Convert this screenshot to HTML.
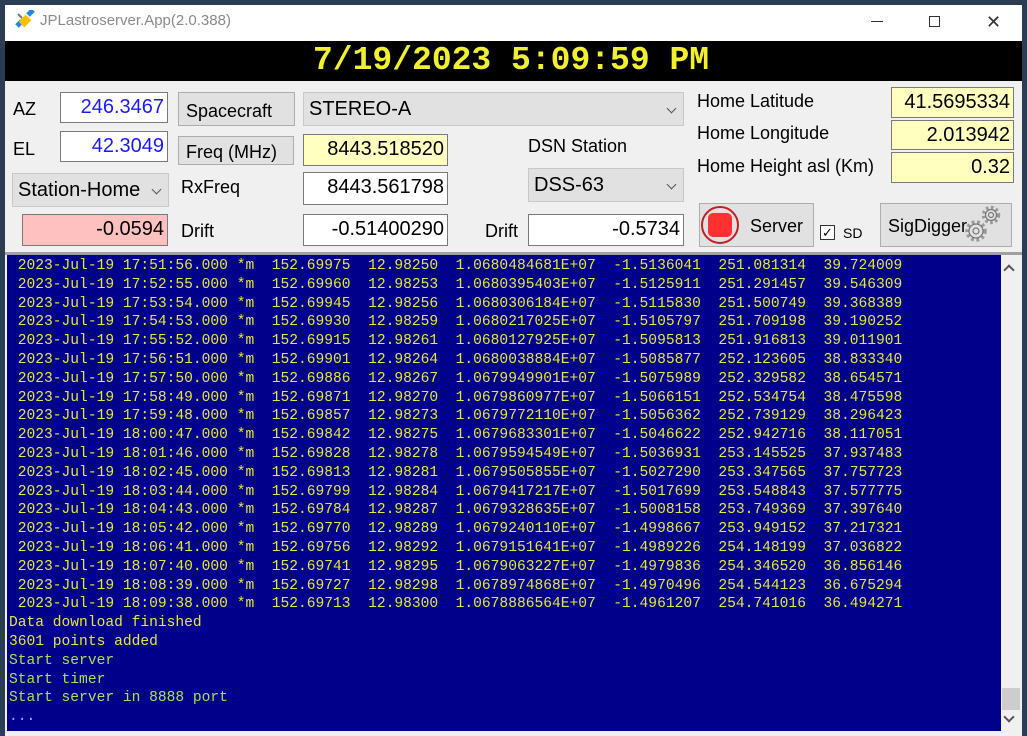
<!DOCTYPE html>
<html><head><meta charset="utf-8"><style>
*{margin:0;padding:0;box-sizing:border-box}
body{width:1027px;height:736px;overflow:hidden;background:#2b3d52;font-family:"Liberation Sans",sans-serif;position:relative}
.a{position:absolute}
#win{position:absolute;left:5px;top:5px;width:1017px;height:731px;background:#f0f0f0}
.lbl{position:absolute;font-size:18px;color:#000;line-height:20px}
.in{position:absolute;background:#fff;border:1px solid #7a7a7a;font-size:20px;text-align:right;padding-right:3px;line-height:29px;color:#000}
.btn{position:absolute;background:#e1e1e1;border:1px solid #adadad;font-size:18px;color:#000}
.cmb{position:absolute;background:#e1e1e1;border:1px solid #c8c8c8;font-size:20px;color:#000;line-height:32px;padding-left:5px}
.cmb:after{content:"";position:absolute;right:8px;top:12px;width:6px;height:6px;border-right:1px solid #555;border-bottom:1px solid #555;transform:rotate(45deg)}
#log{position:absolute;left:7px;top:255px;width:994px;height:476px;background:#00008b;font-family:"Liberation Mono",monospace;font-size:14.6px;line-height:18.8px;color:#e6e63c;white-space:pre;padding:2px 0 0 2px;overflow:hidden}
.g{color:#a8e050}
</style></head><body>
<div id="win"></div>
<div class="a" style="left:5px;top:5px;width:1017px;height:36px;background:#fff"></div>
<svg class="a" style="left:14px;top:10px" width="22" height="22" viewBox="0 0 22 22">
<path d="M3 16 L8 11" stroke="#1e88e5" stroke-width="5"/><path d="M14 5 L19 0" stroke="#1e88e5" stroke-width="5"/>
<rect x="7" y="6" width="8" height="10" fill="#f5c000" transform="rotate(45 11 11)"/>
<path d="M4 4 L8 8" stroke="#777" stroke-width="2"/></svg>
<div class="a" style="left:40px;top:12px;font-size:15px;color:#8a8a8a">JPLastroserver.App(2.0.388)</div>
<div class="a" style="left:871px;top:21px;width:12px;height:1px;background:#333"></div>
<div class="a" style="left:929px;top:16px;width:11px;height:11px;border:1px solid #333"></div>
<div class="a" style="left:986px;top:12px;font-size:18px;color:#333">✕</div>
<div class="a" style="left:5px;top:41px;width:1017px;height:40px;background:#000"></div>
<div class="a" style="left:313px;top:42px;font-family:'Liberation Mono',monospace;font-size:33px;line-height:38px;color:#f0f030;font-weight:bold">7/19/2023 5:09:59 PM</div>
<div class="lbl" style="left:13px;top:99px">AZ</div>
<div class="in" style="left:60px;top:92px;width:108px;height:31px;color:#1a1aff">246.3467</div>
<div class="lbl" style="left:13px;top:139px">EL</div>
<div class="in" style="left:60px;top:131px;width:108px;height:31px;color:#1a1aff">42.3049</div>
<div class="cmb" style="left:12px;top:173px;width:157px;height:34px">Station-Home</div>
<div class="in" style="left:22px;top:214px;width:146px;height:32px;background:#ffc0c0">-0.0594</div>
<div class="btn" style="left:178px;top:92px;width:117px;height:34px;padding:8px 0 0 7px">Spacecraft</div>
<div class="btn" style="left:178px;top:136px;width:116px;height:29px;padding:5px 0 0 7px">Freq (MHz)</div>
<div class="lbl" style="left:181px;top:177px">RxFreq</div>
<div class="lbl" style="left:181px;top:221px">Drift</div>
<div class="cmb" style="left:303px;top:92px;width:381px;height:34px">STEREO-A</div>
<div class="in" style="left:303px;top:134px;width:145px;height:32px;background:#ffffc0">8443.518520</div>
<div class="in" style="left:303px;top:172px;width:145px;height:33px">8443.561798</div>
<div class="in" style="left:303px;top:214px;width:145px;height:32px">-0.51400290</div>
<div class="lbl" style="left:528px;top:136px">DSN Station</div>
<div class="cmb" style="left:528px;top:168px;width:156px;height:34px">DSS-63</div>
<div class="lbl" style="left:485px;top:221px">Drift</div>
<div class="in" style="left:528px;top:214px;width:156px;height:32px">-0.5734</div>
<div class="lbl" style="left:697px;top:91px">Home Latitude</div>
<div class="lbl" style="left:697px;top:123px">Home Longitude</div>
<div class="lbl" style="left:697px;top:156px">Home Height asl (Km)</div>
<div class="in" style="left:891px;top:87px;width:123px;height:31px;background:#ffffc0">41.5695334</div>
<div class="in" style="left:891px;top:120px;width:123px;height:30px;background:#ffffc0;line-height:28px">2.013942</div>
<div class="in" style="left:891px;top:152px;width:123px;height:31px;background:#ffffc0">0.32</div>
<div class="btn" style="left:699px;top:203px;width:115px;height:44px"></div>
<svg class="a" style="left:700px;top:205px" width="40" height="40"><circle cx="20" cy="20" r="18" fill="none" stroke="#c02020" stroke-width="2"/><rect x="8" y="8" width="24" height="24" rx="5" fill="#ff3030"/></svg>
<div class="lbl" style="left:750px;top:216px">Server</div>
<div class="a" style="left:820px;top:225px;width:15px;height:15px;border:1px solid #333;background:#fff;font-size:13px;line-height:13px;text-align:center">✓</div>
<div class="a" style="left:843px;top:225px;font-size:14px">SD</div>
<div class="btn" style="left:880px;top:203px;width:132px;height:44px"></div>
<div class="lbl" style="left:888px;top:216px">SigDigger</div>
<svg class="a" style="left:962px;top:204px" width="44" height="42" fill="none" stroke="#777" stroke-width="1.2">
<circle cx="29" cy="11" r="7.5" stroke-dasharray="2.6 2.4" stroke-width="3.5" stroke="#999"/><circle cx="29" cy="11" r="5.5" fill="#e1e1e1"/><circle cx="29" cy="11" r="2.5"/>
<circle cx="14" cy="27" r="9" stroke-dasharray="2.8 2.6" stroke-width="3.5" stroke="#999"/><circle cx="14" cy="27" r="7" fill="#e1e1e1"/><circle cx="14" cy="27" r="3"/></svg>
<div class="a" style="left:5px;top:252px;width:1017px;height:3px;background:#a0a0a0"></div>
<div id="log"> 2023-Jul-19 17:51:56.000 *m  152.69975  12.98250  1.0680484681E+07  -1.5136041  251.081314  39.724009
 2023-Jul-19 17:52:55.000 *m  152.69960  12.98253  1.0680395403E+07  -1.5125911  251.291457  39.546309
 2023-Jul-19 17:53:54.000 *m  152.69945  12.98256  1.0680306184E+07  -1.5115830  251.500749  39.368389
 2023-Jul-19 17:54:53.000 *m  152.69930  12.98259  1.0680217025E+07  -1.5105797  251.709198  39.190252
 2023-Jul-19 17:55:52.000 *m  152.69915  12.98261  1.0680127925E+07  -1.5095813  251.916813  39.011901
 2023-Jul-19 17:56:51.000 *m  152.69901  12.98264  1.0680038884E+07  -1.5085877  252.123605  38.833340
 2023-Jul-19 17:57:50.000 *m  152.69886  12.98267  1.0679949901E+07  -1.5075989  252.329582  38.654571
 2023-Jul-19 17:58:49.000 *m  152.69871  12.98270  1.0679860977E+07  -1.5066151  252.534754  38.475598
 2023-Jul-19 17:59:48.000 *m  152.69857  12.98273  1.0679772110E+07  -1.5056362  252.739129  38.296423
 2023-Jul-19 18:00:47.000 *m  152.69842  12.98275  1.0679683301E+07  -1.5046622  252.942716  38.117051
 2023-Jul-19 18:01:46.000 *m  152.69828  12.98278  1.0679594549E+07  -1.5036931  253.145525  37.937483
 2023-Jul-19 18:02:45.000 *m  152.69813  12.98281  1.0679505855E+07  -1.5027290  253.347565  37.757723
 2023-Jul-19 18:03:44.000 *m  152.69799  12.98284  1.0679417217E+07  -1.5017699  253.548843  37.577775
 2023-Jul-19 18:04:43.000 *m  152.69784  12.98287  1.0679328635E+07  -1.5008158  253.749369  37.397640
 2023-Jul-19 18:05:42.000 *m  152.69770  12.98289  1.0679240110E+07  -1.4998667  253.949152  37.217321
 2023-Jul-19 18:06:41.000 *m  152.69756  12.98292  1.0679151641E+07  -1.4989226  254.148199  37.036822
 2023-Jul-19 18:07:40.000 *m  152.69741  12.98295  1.0679063227E+07  -1.4979836  254.346520  36.856146
 2023-Jul-19 18:08:39.000 *m  152.69727  12.98298  1.0678974868E+07  -1.4970496  254.544123  36.675294
 2023-Jul-19 18:09:38.000 *m  152.69713  12.98300  1.0678886564E+07  -1.4961207  254.741016  36.494271
Data download finished
3601 points added
<span class="g">Start server
Start timer
Start server in 8888 port</span>
<span style="color:#8fb0ff">...</span></div>
<div class="a" style="left:1001px;top:255px;width:20px;height:476px;background:#f0f0f0"></div>
<div class="a" style="left:1005px;top:266px;width:8px;height:8px;border-left:2px solid #555;border-top:2px solid #555;transform:rotate(45deg)"></div>
<div class="a" style="left:1002px;top:688px;width:18px;height:22px;background:#cdcdcd"></div>
<div class="a" style="left:1005px;top:713px;width:8px;height:8px;border-right:2px solid #555;border-bottom:2px solid #555;transform:rotate(45deg)"></div>
</body></html>
